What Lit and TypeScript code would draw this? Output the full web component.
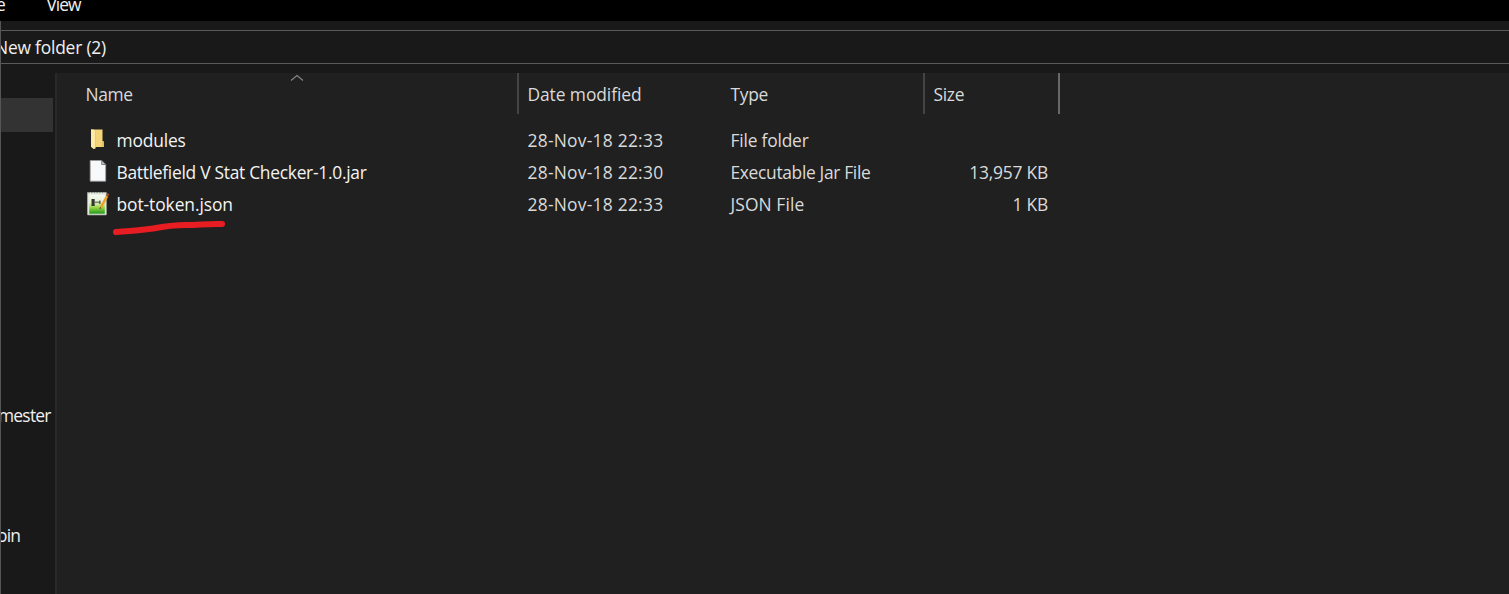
import { LitElement, html, css, svg } from "lit";
import { customElement } from "lit/decorators.js";

const folderIcon = svg`
  <path d="M4 2.5h11.500v11.500l1.500.8v5.200H6L4 19z" fill="#f3d478"/>
  <path d="M4 2.5h2.500l2 1.500v17.500l-2 .5L4 19.800z" fill="#ffe9a6"/>
  <path d="M15 14.500h2V20h-2z" fill="#e5bd5d"/>
  <path d="M8.500 4v16.500" stroke="#e3c169" stroke-width=".7"/>`;

const fileIcon = svg`
  <path d="M3.200 1.500h11.500l4 4v16.700H3.200z" fill="#f8f9fa" stroke="#9a9a9a" stroke-width=".8"/>
  <path d="M14.700 1.500v4h4z" fill="#c8c8c8" stroke="#666" stroke-width=".8"/>`;

const jsonIcon = svg`
  <defs><linearGradient id="g" x1="0" y1="0" x2="0" y2="1">
    <stop offset="0" stop-color="#f6f8f3"/><stop offset=".4" stop-color="#e4f1cb"/>
    <stop offset=".65" stop-color="#9ed94c"/><stop offset="1" stop-color="#209818"/>
  </linearGradient></defs>
  <path d="M.7 1.500h18.500v22.300H.7z" fill="#e9efe1" stroke="#c6cec0" stroke-width=".8"/>
  <path d="M2.200 4h15.600v18.700H2.200z" fill="url(#g)"/>
  <path d="M1.300 1.700h17" stroke="#858b84" stroke-width="1.2" stroke-dasharray="1.5 1.2"/>
  <path d="M4.500 8h3.200v7H4.500z" fill="#33382f"/>
  <path d="M8 11.200h5.500" stroke="#6a7263" stroke-width="1.3"/><path d="M12.800 9.500v3.500" stroke="#4e5748" stroke-width="1.300"/>
  <path d="M12.500 18.500l.8-3.800L19 4.500l2.200 1.200-5.700 10.400z" fill="#eca42c"/>
  <path d="M19 4.500l1.200-2.500 2.200 1.200-1.200 2.500z" fill="#9a4a32"/>
  <path d="M12.500 18.500l.5-2.500 1.300.9z" fill="#5a431f"/>`;

const files = [
  { icon: folderIcon, name: "modules", nc: "n0", date: "28-Nov-18 22:33", type: "File folder", tc: "t0", size: "" },
  { icon: fileIcon, name: "Battlefield V Stat Checker-1.0.jar", nc: "n1", date: "28-Nov-18 22:30", type: "Executable Jar File", tc: "t1", size: "13,957 KB" },
  { icon: jsonIcon, name: "bot-token.json", nc: "n2", date: "28-Nov-18 22:33", type: "JSON File", tc: "t2", size: "1 KB" },
];

@customElement("app-root")
export class AppRoot extends LitElement {
  static styles = css`
    :host { display: flex; flex-direction: column; width: 100%; height: 594px; overflow: hidden;
      box-sizing: border-box; position: relative; background: #191919; color: #f0f0f0;
      font: 17.4px/24px "Open Sans", "Noto Sans", sans-serif; letter-spacing: -0.4px; white-space: nowrap; }
    .ribbon { height: 21px; flex: none; background: #000; overflow: hidden; display: flex; }
    .ribbon span { display: block; margin-top: -8px; letter-spacing: -1px; }
    .ribbon .cut { width: 46.5px; text-indent: -4px; }
    .address { height: 32px; flex: none; margin: 9px 0; border: solid #5a5a5a; border-width: 1px 0; line-height: 33px; }
    .address span { display: block; margin-left: -5px; letter-spacing: -0.2px; }
    .body { flex: 1; display: flex; min-height: 0; }
    .nav { width: 55px; overflow: hidden; flex: none; border-right: 2px solid #292929; box-sizing: content-box; }
    .selected { height: 34px; width: 52.500px; margin-top: 25px; background: #333; }
    .semester { margin: 271px 0 0 -2px; letter-spacing: -0.75px; }
    .bin { margin: 96px 0 0 -3px; letter-spacing: -0.8px; }
    .content { flex: 1; background: #202020; }
    .grid { display: grid; grid-template-columns: 462px 203px 203px 135px; }
    .head { height: 41px; color: #dadada; }
    .head > div { padding: 9px 0 0 8.500px; box-sizing: border-box; position: relative; }
    .head > div:first-child { padding-left: 28.500px; border-right: 2px solid #444; }
    .head > div:nth-child(3) { border-right: 2px solid #444; }
    .head > div:nth-child(4) { border-right: 2px solid #686868; }
    .sort { position: absolute; left: 233px; top: 1px; }
    .date-head { letter-spacing: -0.08px; }
    .type-head, .size-head { letter-spacing: -0.3px; }
    .rows { padding-top: 10px; }
    .row { height: 32px; line-height: 32px; color: #dadada; }
    .row > div { padding-left: 8.500px; }
    .row > .name { padding-left: 30px; display: flex; color: #f4f4f4; }
    .icon { width: 24px; height: 25px; margin: 3px 5.500px 0 0; flex: none; }
    .row > .size { text-align: right; padding: 0 12px 0 0; letter-spacing: -0.2px; }
    .date { letter-spacing: 0.25px; }
    .n0 { letter-spacing: -0.15px; }
    .n1 { letter-spacing: -0.28px; }
    .n2 { letter-spacing: -0.08px; }
    .t0 { letter-spacing: -0.2px; }
    .t1 { letter-spacing: -0.33px; }
    .t2 { letter-spacing: 0.1px; }
    .edge { position: absolute; left: 0; top: 21px; bottom: 0; width: 1px; background: #555; }
    .mark { position: absolute; left: 105px; top: 212px; }
  `;

  render() {
    return html`
      <div class="ribbon"><span class="cut">e</span><span>View</span></div>
      <div class="address"><span>New folder (2)</span></div>
      <div class="body">
        <div class="nav"><div class="selected"></div><div class="semester">mester</div><div class="bin">oin</div></div>
        <div class="content">
          <div class="grid head">
            <div><span>Name</span><svg class="sort" width="14" height="8"><path d="M1 6.5L7 1.5l6 5" fill="none" stroke="#858585" stroke-width="1.2"/></svg></div>
            <div><span class="date-head">Date modified</span></div><div><span class="type-head">Type</span></div><div><span class="size-head">Size</span></div>
          </div>
          <div class="rows">
            ${files.map((f) => html`<div class="grid row">
              <div class="name"><svg class="icon" viewBox="0 0 24 25">${f.icon}</svg><span class=${f.nc}>${f.name}</span></div>
              <div><span class="date">${f.date}</span></div><div><span class=${f.tc}>${f.type}</span></div><div class="size">${f.size}</div>
            </div>`)}
          </div>
        </div>
      </div>
      <div class="edge"></div>
      <svg class="mark" width="130" height="30"><path d="M11 20C27 19 37 18 48 16.500C61 14 69 13 81 13C94 13 102 11.500 117 12" fill="none" stroke="#e71d22" stroke-width="6" stroke-linecap="round"/></svg>
    `;
  }
}
